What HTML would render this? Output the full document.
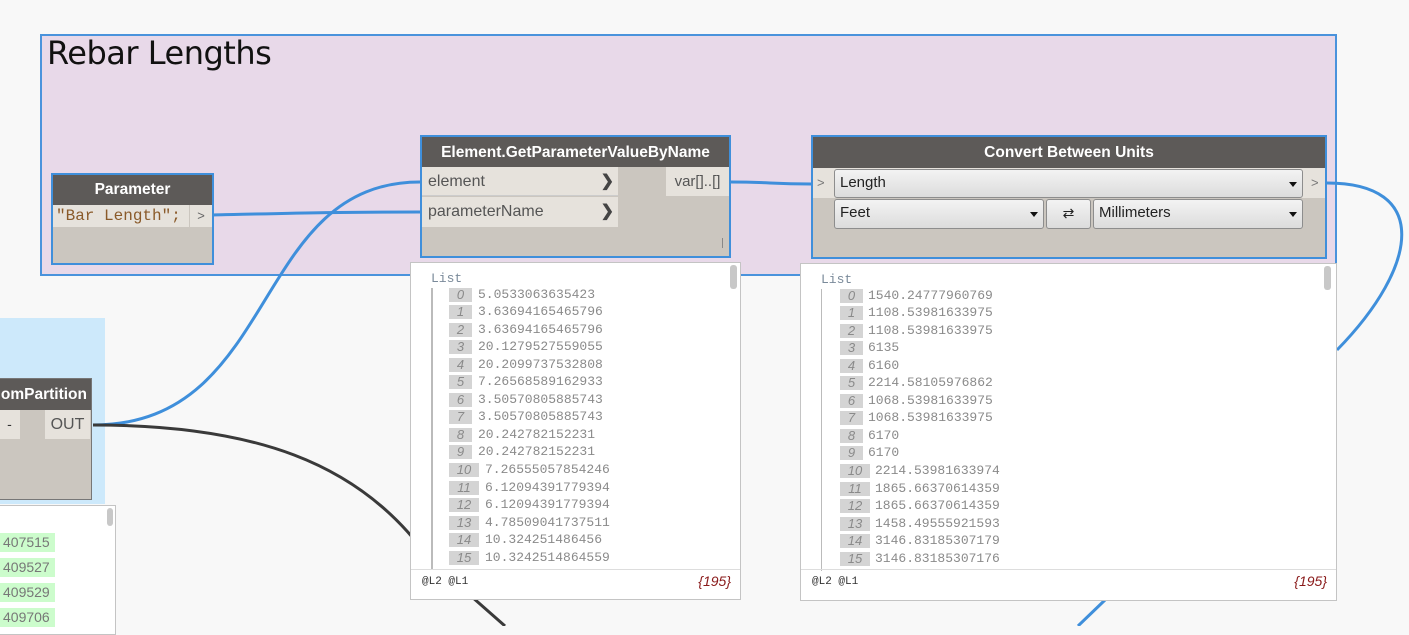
<!DOCTYPE html>
<html><head><meta charset="utf-8"><style>
*{margin:0;padding:0;box-sizing:border-box}
body{width:1409px;height:626px;overflow:hidden;background:#f8f8f8;position:relative;font-family:"Liberation Sans",sans-serif}
.a{position:absolute}
.hdr{background:#5d5a58;color:#fff;font-weight:bold;font-size:15.5px;text-align:center}
.node{background:#cbc6bf;border:2px solid #3f8fdb}
.watch{background:#fff;border:1px solid #c4c4c4}
.mono{font-family:"Liberation Mono",monospace;font-size:13px;color:#8a8a8a}
.ix{position:absolute;background:#d4d4d4;color:#8a8a8a;font-style:italic;text-align:center;height:14px;line-height:14px;font-family:"Liberation Sans",sans-serif;font-size:13px}
.v{position:absolute;line-height:14px}
.dd{position:absolute;background:linear-gradient(#f3f3f3,#dcdcdc);border:1px solid #8d8d8d;border-radius:3px;font-size:15px;color:#222;padding-left:5px;line-height:26px}
.tri{position:absolute;right:5px;top:12px;width:0;height:0;border-left:4px solid transparent;border-right:4px solid transparent;border-top:5px solid #111}
</style></head><body>

<div class="a" style="left:0;top:318px;width:105px;height:186px;background:#cde9fb"></div>
<div class="a node" style="left:-2px;top:378px;width:94px;height:122px;border:1px solid #777">
 <div class="hdr" style="height:31px;line-height:31px;text-align:right;padding-right:4px">omPartition</div>
 <div class="a" style="left:0;top:31px;width:21px;height:29px;background:#e6e2dc;text-align:center;line-height:28px;font-size:14px;color:#333">-</div>
 <div class="a" style="left:46px;top:31px;width:45px;height:29px;background:#e6e2dc;text-align:center;line-height:29px;font-size:16px;color:#555">OUT</div>
</div>
<div class="a watch" style="left:-1px;top:505px;width:117px;height:130px">
 <div class="a" style="right:2px;top:2px;width:6px;height:18px;background:#c8c8c8;border-radius:3px"></div>
 <div class="a" style="left:0;top:27px;width:55px;height:19px;background:#ccfccc;font-size:14px;color:#777;line-height:19px;padding-left:3px">407515</div>
 <div class="a" style="left:0;top:52px;width:55px;height:19px;background:#ccfccc;font-size:14px;color:#777;line-height:19px;padding-left:3px">409527</div>
 <div class="a" style="left:0;top:77px;width:55px;height:19px;background:#ccfccc;font-size:14px;color:#777;line-height:19px;padding-left:3px">409529</div>
 <div class="a" style="left:0;top:102px;width:55px;height:19px;background:#ccfccc;font-size:14px;color:#777;line-height:19px;padding-left:3px">409706</div>
</div>

<div class="a" style="left:40px;top:34px;width:1297px;height:242px;background:#e8d9e9;border:2px solid #4a93dc"></div>
<div class="a" style="left:47px;top:34px;font-size:32px;color:#111;font-family:'DejaVu Sans','Liberation Sans',sans-serif;letter-spacing:-0.5px">Rebar Lengths</div>

<svg class="a" style="left:0;top:0" width="1409" height="626">
 <path d="M93 425 C280 425,250 182,420 182" fill="none" stroke="#3f8fdb" stroke-width="3"/>
 <path d="M213 215 C300 213,330 212,420 212" fill="none" stroke="#3f8fdb" stroke-width="3"/>
 <path d="M730 182 C770 182,770 184,811 184" fill="none" stroke="#3f8fdb" stroke-width="3"/>
 <path d="M1327 183 C1430 183,1420 265,1337 350" fill="none" stroke="#3f8fdb" stroke-width="3"/>
 <path d="M93 425 C250 425,360 460,430 560 L505 626" fill="none" stroke="#3a3a3a" stroke-width="3"/>
 <path d="M1078 626 L1105 600" fill="none" stroke="#3f8fdb" stroke-width="3"/>
</svg>

<div class="a node" style="left:51px;top:173px;width:163px;height:92px">
 <div class="hdr" style="height:30px;line-height:30px">Parameter</div>
 <div class="a" style="left:0;top:30px;width:136px;height:22px;background:#e6e2dc;font-family:'Liberation Mono',monospace;font-size:16px;color:#8a5a2a;line-height:22px;padding-left:3px;white-space:nowrap">"Bar Length";</div>
 <div class="a" style="left:137px;top:30px;width:22px;height:22px;background:#e6e2dc;font-size:13px;color:#666;text-align:center;line-height:22px">&gt;</div>
</div>

<div class="a node" style="left:420px;top:135px;width:311px;height:123px">
 <div class="hdr" style="height:30px;line-height:31px">Element.GetParameterValueByName</div>
 <div class="a" style="left:0;top:30px;width:196px;height:29px;background:#e6e2dc;border-bottom:1px solid #ccc;font-size:16px;color:#555;line-height:29px;padding-left:6px">element<span class="a" style="right:4px;top:0;font-weight:bold;color:#444">&#x276F;</span></div>
 <div class="a" style="left:0;top:60px;width:196px;height:30px;background:#e6e2dc;font-size:16px;color:#555;line-height:30px;padding-left:6px">parameterName<span class="a" style="right:4px;top:0;font-weight:bold;color:#444">&#x276F;</span></div>
 <div class="a" style="left:244px;top:30px;width:63px;height:29px;background:#e6e2dc;font-size:15px;color:#555;line-height:29px;text-align:center">var[]..[]</div>
 <div class="a" style="right:6px;top:101px;width:1px;height:10px;background:#888"></div>
</div>

<div class="a node" style="left:811px;top:135px;width:516px;height:124px">
 <div class="hdr" style="height:31px;line-height:32px">Convert Between Units</div>
 <div class="a" style="left:0;top:31px;width:512px;height:30px;background:#e6e2dc"></div>
 <div class="a" style="left:4px;top:38px;font-size:13px;color:#777">&gt;</div>
 <div class="a" style="left:498px;top:38px;font-size:13px;color:#777">&gt;</div>
 <div class="dd" style="left:21px;top:32px;width:469px;height:29px">Length<div class="tri"></div></div>
 <div class="dd" style="left:21px;top:62px;width:210px;height:30px">Feet<div class="tri"></div></div>
 <div class="dd" style="left:233px;top:62px;width:45px;height:30px;text-align:center;padding:0;font-size:14px">&#x21C4;</div>
 <div class="dd" style="left:280px;top:62px;width:210px;height:30px">Millimeters<div class="tri"></div></div>
</div>

<div class="a watch mono" style="left:410px;top:262px;width:331px;height:338px">
 <div class="a" style="left:319px;top:2px;width:7px;height:24px;background:#c8c8c8;border-radius:3px"></div>
 <div class="a" style="left:20px;top:8px;color:#7a8a9a;font-size:13px">List</div>
 <div class="a" style="left:20px;top:25px;width:2px;height:282px;background:#bbb"></div>
 <div class="a" style="left:0;top:306px;width:329px;height:1px;background:#ddd"></div>
 <div class="a" style="left:11px;top:313px;color:#333;font-size:11px">@L2 @L1</div>
 <div class="a" style="right:9px;top:310px;color:#8a1a1a;font-style:italic;font-family:'Liberation Sans',sans-serif;font-size:14px">{195}</div>
</div>
<div class="a watch mono" style="left:800px;top:263px;width:537px;height:338px">
 <div class="a" style="left:523px;top:2px;width:7px;height:24px;background:#c8c8c8;border-radius:3px"></div>
 <div class="a" style="left:20px;top:8px;color:#7a8a9a;font-size:13px">List</div>
 <div class="a" style="left:20px;top:25px;width:1px;height:282px;background:#bbb"></div>
 <div class="a" style="left:0;top:305px;width:535px;height:1px;background:#ddd"></div>
 <div class="a" style="left:11px;top:312px;color:#333;font-size:11px">@L2 @L1</div>
 <div class="a" style="right:9px;top:309px;color:#8a1a1a;font-style:italic;font-family:'Liberation Sans',sans-serif;font-size:14px">{195}</div>
</div>

<div class="mono">
<div class="ix" style="left:449px;top:288px;width:23px">0</div><div class="v" style="left:478px;top:288px">5.0533063635423</div>
<div class="ix" style="left:449px;top:305px;width:23px">1</div><div class="v" style="left:478px;top:305px">3.63694165465796</div>
<div class="ix" style="left:449px;top:323px;width:23px">2</div><div class="v" style="left:478px;top:323px">3.63694165465796</div>
<div class="ix" style="left:449px;top:340px;width:23px">3</div><div class="v" style="left:478px;top:340px">20.1279527559055</div>
<div class="ix" style="left:449px;top:358px;width:23px">4</div><div class="v" style="left:478px;top:358px">20.2099737532808</div>
<div class="ix" style="left:449px;top:375px;width:23px">5</div><div class="v" style="left:478px;top:375px">7.26568589162933</div>
<div class="ix" style="left:449px;top:393px;width:23px">6</div><div class="v" style="left:478px;top:393px">3.50570805885743</div>
<div class="ix" style="left:449px;top:410px;width:23px">7</div><div class="v" style="left:478px;top:410px">3.50570805885743</div>
<div class="ix" style="left:449px;top:428px;width:23px">8</div><div class="v" style="left:478px;top:428px">20.242782152231</div>
<div class="ix" style="left:449px;top:445px;width:23px">9</div><div class="v" style="left:478px;top:445px">20.242782152231</div>
<div class="ix" style="left:449px;top:463px;width:30px">10</div><div class="v" style="left:485px;top:463px">7.26555057854246</div>
<div class="ix" style="left:449px;top:481px;width:30px">11</div><div class="v" style="left:485px;top:481px">6.12094391779394</div>
<div class="ix" style="left:449px;top:498px;width:30px">12</div><div class="v" style="left:485px;top:498px">6.12094391779394</div>
<div class="ix" style="left:449px;top:516px;width:30px">13</div><div class="v" style="left:485px;top:516px">4.78509041737511</div>
<div class="ix" style="left:449px;top:533px;width:30px">14</div><div class="v" style="left:485px;top:533px">10.324251486456</div>
<div class="ix" style="left:449px;top:551px;width:30px">15</div><div class="v" style="left:485px;top:551px">10.3242514864559</div>

<div class="ix" style="left:840px;top:289px;width:23px">0</div><div class="v" style="left:868px;top:289px">1540.24777960769</div>
<div class="ix" style="left:840px;top:306px;width:23px">1</div><div class="v" style="left:868px;top:306px">1108.53981633975</div>
<div class="ix" style="left:840px;top:324px;width:23px">2</div><div class="v" style="left:868px;top:324px">1108.53981633975</div>
<div class="ix" style="left:840px;top:341px;width:23px">3</div><div class="v" style="left:868px;top:341px">6135</div>
<div class="ix" style="left:840px;top:359px;width:23px">4</div><div class="v" style="left:868px;top:359px">6160</div>
<div class="ix" style="left:840px;top:376px;width:23px">5</div><div class="v" style="left:868px;top:376px">2214.58105976862</div>
<div class="ix" style="left:840px;top:394px;width:23px">6</div><div class="v" style="left:868px;top:394px">1068.53981633975</div>
<div class="ix" style="left:840px;top:411px;width:23px">7</div><div class="v" style="left:868px;top:411px">1068.53981633975</div>
<div class="ix" style="left:840px;top:429px;width:23px">8</div><div class="v" style="left:868px;top:429px">6170</div>
<div class="ix" style="left:840px;top:446px;width:23px">9</div><div class="v" style="left:868px;top:446px">6170</div>
<div class="ix" style="left:840px;top:464px;width:30px">10</div><div class="v" style="left:875px;top:464px">2214.53981633974</div>
<div class="ix" style="left:840px;top:482px;width:30px">11</div><div class="v" style="left:875px;top:482px">1865.66370614359</div>
<div class="ix" style="left:840px;top:499px;width:30px">12</div><div class="v" style="left:875px;top:499px">1865.66370614359</div>
<div class="ix" style="left:840px;top:517px;width:30px">13</div><div class="v" style="left:875px;top:517px">1458.49555921593</div>
<div class="ix" style="left:840px;top:534px;width:30px">14</div><div class="v" style="left:875px;top:534px">3146.83185307179</div>
<div class="ix" style="left:840px;top:552px;width:30px">15</div><div class="v" style="left:875px;top:552px">3146.83185307176</div>
</div>
</body></html>
